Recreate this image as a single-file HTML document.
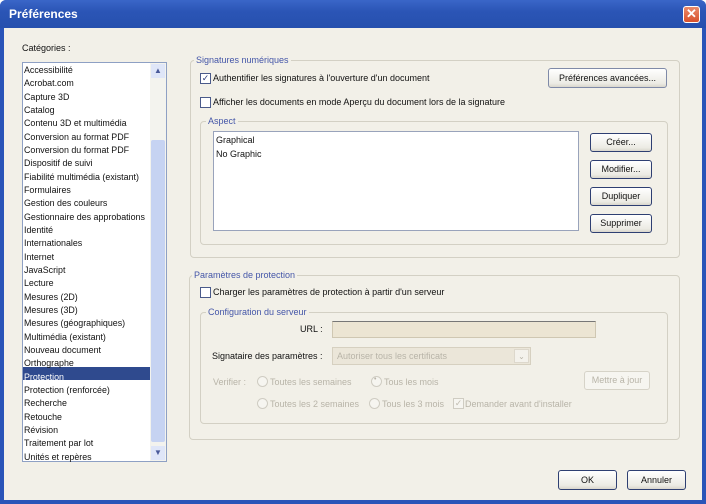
<!DOCTYPE html>
<html><head><meta charset="utf-8"><style>
*{margin:0;padding:0;box-sizing:border-box}
body{width:706px;height:504px;overflow:hidden;background:#fff;font-family:"Liberation Sans",sans-serif;font-size:9px;color:#111;position:relative}
.a{position:absolute;white-space:nowrap}
#win{position:absolute;left:0;top:0;width:706px;height:504px;background:#2a54b8;border-radius:6px 6px 0 0}
#title{position:absolute;left:0;top:0;width:706px;height:28px;background:linear-gradient(#3a66c8,#2b55b6 40%,#2650ae);border-radius:6px 6px 0 0}
#title span{position:absolute;left:9px;top:7px;color:#fff;font-weight:bold;font-size:12px}
#close{position:absolute;left:683px;top:6px;width:17px;height:17px;background:linear-gradient(#e98a6a,#d8502c);border:1px solid #fff;border-radius:3px;color:#fff;font-size:13px;font-weight:bold;line-height:14px;text-align:center}
#body{position:absolute;left:4px;top:28px;width:698px;height:472px;background:#f2f0e8}
.box{position:absolute;border:1px solid #d3d0c4;border-radius:4px}
.leg{position:absolute;background:#f2f0e8;color:#4456a8;padding:0 2px;font-size:9px}
.list{position:absolute;background:#fff;border:1px solid #8ea0c4}
.btn{position:absolute;border:1px solid #2e3f72;border-radius:3px;background:linear-gradient(#fff,#ecebe4 80%,#d9d6cc);text-align:center;font-size:9px;color:#111}
.cb{position:absolute;width:11px;height:11px;border:1px solid #4a5a8a;background:#fff}
.dis{color:#b8b4a8}
.rad{position:absolute;width:11px;height:11px;border:1px solid #cfccc2;border-radius:50%;background:#f6f5f0}
</style></head><body>
<div id="win"></div>
<div id="title"><span>Préférences</span><div id="close">✕</div></div>
<div id="body"></div>

<div class="a" style="left:22px;top:43px">Catégories :</div>
<div class="list" style="left:22px;top:62px;width:145px;height:400px"></div>
<div class="a" style="left:150px;top:63px;width:16px;height:398px;background:#f3f3ee"></div>
<div class="a" style="left:151px;top:140px;width:14px;height:302px;background:#c6d3f2;border-radius:2px"></div>
<div class="a" style="left:151px;top:64px;width:14px;height:14px;background:#dfe6f8;color:#4a5a9a;font-size:8px;text-align:center;line-height:14px">▲</div>
<div class="a" style="left:151px;top:446px;width:14px;height:14px;background:#dfe6f8;color:#4a5a9a;font-size:8px;text-align:center;line-height:14px">▼</div>
<div class="a" style="left:23px;top:367px;width:127px;height:13px;background:#2f4a8e"></div>
<div class="a" style="left:24px;top:64px;line-height:13.33px;font-size:8.9px">Accessibilité<br>Acrobat.com<br>Capture 3D<br>Catalog<br>Contenu 3D et multimédia<br>Conversion au format PDF<br>Conversion du format PDF<br>Dispositif de suivi<br>Fiabilité multimédia (existant)<br>Formulaires<br>Gestion des couleurs<br>Gestionnaire des approbations<br>Identité<br>Internationales<br>Internet<br>JavaScript<br>Lecture<br>Mesures (2D)<br>Mesures (3D)<br>Mesures (géographiques)<br>Multimédia (existant)<br>Nouveau document<br>Orthographe<br><span style="color:#fff">Protection</span><br>Protection (renforcée)<br>Recherche<br>Retouche<br>Révision<br>Traitement par lot<br>Unités et repères</div>

<div class="box" style="left:190px;top:60px;width:490px;height:198px"></div>
<div class="leg" style="left:194px;top:55px">Signatures numériques</div>
<div class="cb" style="left:200px;top:73px;font-size:9px;line-height:9px;text-align:center;color:#2a3a7a">✓</div>
<div class="a" style="left:213px;top:73px">Authentifier les signatures à l'ouverture d'un document</div>
<div class="btn" style="left:548px;top:68px;width:119px;height:20px;line-height:18px;border-color:#7f8aa8">Préférences avancées...</div>
<div class="cb" style="left:200px;top:97px"></div>
<div class="a" style="left:213px;top:97px">Afficher les documents en mode Aperçu du document lors de la signature</div>
<div class="box" style="left:200px;top:121px;width:468px;height:124px"></div>
<div class="leg" style="left:206px;top:116px">Aspect</div>
<div class="list" style="left:213px;top:131px;width:366px;height:100px;border-color:#99a3bb"></div>
<div class="a" style="left:216px;top:134px;line-height:13.5px">Graphical<br>No Graphic</div>
<div class="btn" style="left:590px;top:133px;width:62px;height:19px;line-height:17px">Créer...</div>
<div class="btn" style="left:590px;top:160px;width:62px;height:19px;line-height:17px">Modifier...</div>
<div class="btn" style="left:590px;top:187px;width:62px;height:19px;line-height:17px">Dupliquer</div>
<div class="btn" style="left:590px;top:214px;width:62px;height:19px;line-height:17px">Supprimer</div>

<div class="box" style="left:189px;top:275px;width:491px;height:165px"></div>
<div class="leg" style="left:192px;top:270px">Paramètres de protection</div>
<div class="cb" style="left:200px;top:287px"></div>
<div class="a" style="left:213px;top:287px">Charger les paramètres de protection à partir d'un serveur</div>
<div class="box" style="left:200px;top:312px;width:468px;height:112px"></div>
<div class="leg" style="left:206px;top:307px">Configuration du serveur</div>
<div class="a" style="left:300px;top:324px">URL :</div>
<div class="a" style="left:332px;top:321px;width:264px;height:17px;background:#ece5d3;border:1px solid #cfc7b2;border-top-color:#777"></div>
<div class="a" style="left:212px;top:351px">Signataire des paramètres :</div>
<div class="a" style="left:332px;top:347px;width:199px;height:18px;background:#ebe6d9;border:1px solid #d6d0c0"></div>
<div class="a dis" style="left:337px;top:351px">Autoriser tous les certificats</div>
<div class="a dis" style="left:514px;top:349px;width:15px;height:14px;border:1px solid #ddd8cc;background:#f4f2ec;font-size:8px;text-align:center;line-height:13px">⌄</div>
<div class="a dis" style="left:213px;top:377px">Verifier :</div>
<div class="rad" style="left:257px;top:376px"></div><div class="a dis" style="left:270px;top:377px">Toutes les semaines</div>
<div class="rad" style="left:371px;top:376px"></div><div class="a dis" style="left:374px;top:376px;font-size:7px">•</div><div class="a dis" style="left:384px;top:377px">Tous les mois</div>
<div class="btn dis" style="left:584px;top:371px;width:66px;height:19px;line-height:17px;border-color:#d6d3c8;background:#f6f5f0;color:#b8b4a8">Mettre à jour</div>
<div class="rad" style="left:257px;top:398px"></div><div class="a dis" style="left:270px;top:399px">Toutes les 2 semaines</div>
<div class="rad" style="left:369px;top:398px"></div><div class="a dis" style="left:382px;top:399px">Tous les 3 mois</div>
<div class="cb" style="left:453px;top:398px;border-color:#cfccc2;background:#f6f5f0;color:#c0bcb0;font-size:9px;line-height:9px;text-align:center">✓</div><div class="a dis" style="left:465px;top:399px">Demander avant d'installer</div>

<div class="btn" style="left:558px;top:470px;width:59px;height:20px;line-height:18px">OK</div>
<div class="btn" style="left:627px;top:470px;width:59px;height:20px;line-height:18px">Annuler</div>
</body></html>
